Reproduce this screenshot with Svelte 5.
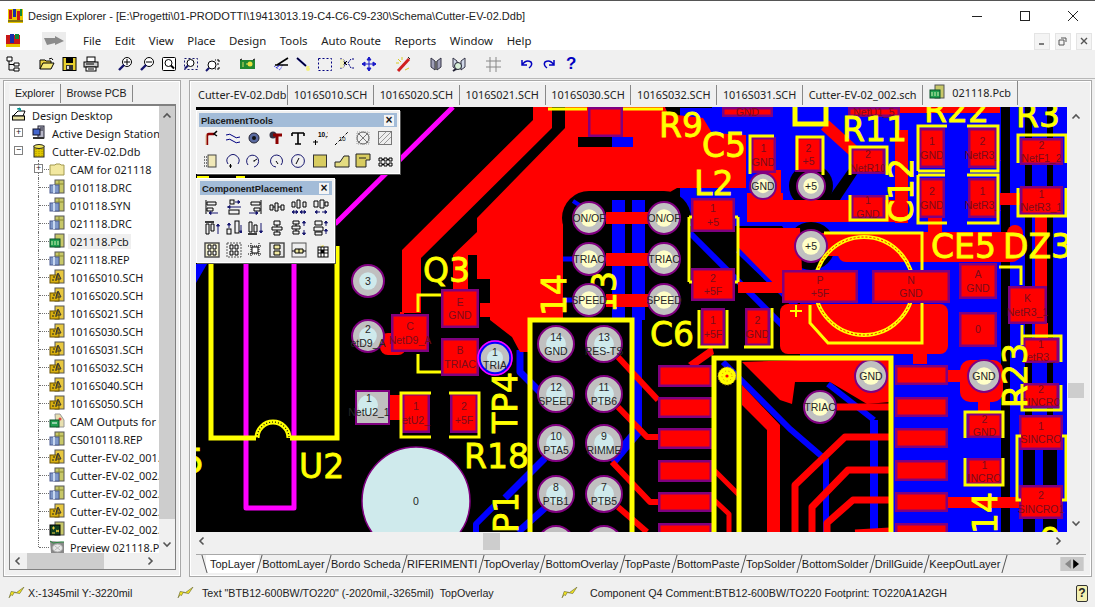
<script lang="ts">
  // --- chrome data ---
  const menus = ['File', 'Edit', 'View', 'Place', 'Design', 'Tools', 'Auto Route', 'Reports', 'Window', 'Help'];
  const docTabs = ['Cutter-EV-02.Ddb', '1016S010.SCH', '1016S020.SCH', '1016S021.SCH', '1016S030.SCH', '1016S032.SCH', '1016S031.SCH', 'Cutter-EV-02_002.sch'];
  const layers = ['BottomLayer', 'Bordo Scheda', 'RIFERIMENTI', 'TopOverlay', 'BottomOverlay', 'TopPaste', 'BottomPaste', 'TopSolder', 'BottomSolder', 'DrillGuide', 'KeepOutLayer'];

  const tree = [
    { t: 'Design Desktop', d: 0, i: 'desk' },
    { t: 'Active Design Station', d: 1, i: 'station', box: '+' },
    { t: 'Cutter-EV-02.Ddb', d: 1, i: 'db', box: '-' },
    { t: 'CAM for 021118', d: 2, i: 'folder', box: '+' },
    { t: '010118.DRC', d: 2, i: 'doc' },
    { t: '010118.SYN', d: 2, i: 'doc' },
    { t: '021118.DRC', d: 2, i: 'doc' },
    { t: '021118.Pcb', d: 2, i: 'pcb', sel: true },
    { t: '021118.REP', d: 2, i: 'doc' },
    { t: '1016S010.SCH', d: 2, i: 'sch' },
    { t: '1016S020.SCH', d: 2, i: 'sch' },
    { t: '1016S021.SCH', d: 2, i: 'sch' },
    { t: '1016S030.SCH', d: 2, i: 'sch' },
    { t: '1016S031.SCH', d: 2, i: 'sch' },
    { t: '1016S032.SCH', d: 2, i: 'sch' },
    { t: '1016S040.SCH', d: 2, i: 'sch' },
    { t: '1016S050.SCH', d: 2, i: 'sch' },
    { t: 'CAM Outputs for 021118', d: 2, i: 'cam' },
    { t: 'CS010118.REP', d: 2, i: 'doc' },
    { t: 'Cutter-EV-02_001.SCH', d: 2, i: 'sch' },
    { t: 'Cutter-EV-02_002.REP', d: 2, i: 'doc' },
    { t: 'Cutter-EV-02_002.XRF', d: 2, i: 'doc' },
    { t: 'Cutter-EV-02_002.sch', d: 2, i: 'sch' },
    { t: 'Cutter-EV-02_002.xls', d: 2, i: 'xls' },
    { t: 'Preview 021118.PCB', d: 2, i: 'preview', last: true }
  ];

  const dk = '#16166e';
  const ic: Record<string, string> = {
    // tree icons
    desk: `<path d="M2 9l5-5h7l-2 5z" fill="#fff" stroke="#000"/><rect x="1.5" y="9" width="12" height="4" fill="#e8e0a0" stroke="#000"/><path d="M6 2l3-1 1 3" fill="#0aa" stroke="#088"/>`,
    station: `<rect x="7" y="1" width="6" height="12" fill="#b8b8c8" stroke="#223"/><rect x="2" y="4" width="7" height="6" fill="#4466cc" stroke="#112"/><path d="M2 13h11" stroke="#333" stroke-width="2"/><path d="M9 3h3M9 5h3" stroke="#223"/>`,
    db: `<rect x="3" y="3" width="10" height="11" fill="#e0c800" stroke="#222"/><ellipse cx="8" cy="3.5" rx="5" ry="2" fill="#f4e860" stroke="#222"/><path d="M5 6v7M8 6v8M11 6v7" stroke="#a89000" stroke-dasharray="1 1"/>`,
    folder: `<path d="M1 4h5l1-1h4l1 1h3v10H1z" fill="#f2e8a0" stroke="#a09850"/>`,
    doc: `<rect x="6" y="1" width="9" height="13" fill="#c8c868" stroke="#555"/><path d="M10 1v13M6 5h9" stroke="#888830"/><rect x="1" y="6" width="9" height="8" fill="#7f98c8" stroke="#4a5a90"/><path d="M5 6v8" stroke="#c8d8f0" stroke-width="2"/>`,
    sch: `<rect x="6" y="1" width="9" height="13" fill="#e8c840" stroke="#555"/><rect x="1" y="6" width="9" height="8" fill="#d8b010" stroke="#6a5000"/><path d="M4 8h5M3 11h5" stroke="#222" stroke-dasharray="2 1"/><path d="M9 4l3 6H7z" fill="none" stroke="#333"/>`,
    pcb: `<rect x="6" y="1" width="9" height="13" fill="#c8c868" stroke="#555"/><rect x="1" y="6" width="10" height="8" fill="#20a050" stroke="#0a5028"/><path d="M3 8v4M6 8v4M9 8v4" stroke="#d0f0b0"/>`,
    cam: `<path d="M6 1l5-0 4 6v7H7z" fill="#e8e0b0" stroke="#999"/><circle cx="11" cy="6" r="1.5" fill="#d44"/><rect x="1" y="7" width="9" height="7" fill="#20a050" stroke="#0a5028"/><path d="M3 10h5" stroke="#fff"/>`,
    xls: `<rect x="6" y="1" width="9" height="13" fill="#c8c868" stroke="#555"/><rect x="1" y="4" width="10" height="10" fill="#104020" stroke="#000"/><path d="M3 7h3M4.5 5.5v3M7 11l3-2M7 9l3 2M3 12h3" stroke="#f0d040"/>`,
    preview: `<path d="M1 2l14 1v11H2z" fill="#888"/><path d="M1 2l3 2 8-1 3 0" fill="none" stroke="#2a8a40"/><ellipse cx="8.5" cy="9" rx="5" ry="4" fill="#e8e8e8" stroke="#aaa"/><path d="M6 7l5 4M11 7l-5 4" stroke="#bbb"/>`,
    // main toolbar
    tree: `<path d="M2 1h5v4H2zM9 7h5v3H9zM9 12h5v3H9z" fill="#fff" stroke="#000"/><path d="M4 5v9h5M4 8.5h5" fill="none" stroke="#000"/>`,
    open: `<path d="M1 13V4h5l1 1h5v2" fill="#e8d040" stroke="#000"/><path d="M1 13l3-6h11l-3 6z" fill="#f4e878" stroke="#000"/><path d="M10 3q3-2 4 1" fill="none" stroke="#000"/>`,
    save: `<rect x="2" y="1.5" width="13" height="13" fill="#e8d030" stroke="#000"/><rect x="5" y="2" width="7" height="5" fill="#000"/><rect x="5" y="9" width="7" height="5" fill="#333"/><rect x="6" y="10" width="2" height="3" fill="#ddd"/>`,
    print: `<rect x="4" y="1" width="8" height="5" fill="#fff" stroke="#000"/><rect x="1" y="6" width="14" height="5" fill="#ccc" stroke="#000"/><rect x="3" y="11" width="10" height="4" fill="#fff" stroke="#000"/><path d="M5 13h6M3 8h8" stroke="#000"/>`,
    zin: `<circle cx="10" cy="6" r="4.5" fill="#fff" stroke="#000"/><path d="M7 6h6M10 3v6" stroke="#000"/><path d="M7 9l-5 5" stroke="${dk}" stroke-width="2.4"/>`,
    zout: `<circle cx="10" cy="6" r="4.5" fill="#fff" stroke="#000"/><path d="M7 6h6" stroke="#000"/><path d="M7 9l-5 5" stroke="${dk}" stroke-width="2.4"/>`,
    zpage: `<rect x="1.5" y="1.5" width="13" height="13" rx="1" fill="#fff" stroke="#000"/><circle cx="7.5" cy="7" r="3.5" fill="#fff" stroke="#000"/><path d="M10 9.5l3 3" stroke="#000" stroke-width="2"/>`,
    zsel: `<rect x="1.5" y="2.5" width="13" height="11" fill="none" stroke="${dk}" stroke-dasharray="2 2"/><circle cx="7.5" cy="7" r="3.5" fill="#fff" stroke="#000"/><path d="M5 9.5l-3 3" stroke="${dk}" stroke-width="2"/>`,
    zdot: `<circle cx="7" cy="9" r="4" fill="#fff" stroke="#000"/><path d="M4 12l-3 3" stroke="${dk}" stroke-width="2"/><path d="M12 4h2M14 4v2M12 8h2M12 13h2M14 11v2" stroke="#000"/><path d="M10 4h1M10 13h1" stroke="#000"/>`,
    board: `<rect x="1" y="4" width="15" height="9" fill="#208830"/><path d="M4 6v5M7 8h5" stroke="#d0e060"/><circle cx="11" cy="8" r="2.5" fill="#e8e040"/><path d="M1 4l2-1M14 4l2-1" stroke="#000"/>`,
    cross: `<path d="M1 10l6 4 3-6" fill="none" stroke="#2a2ae0" stroke-dasharray="1 1"/><path d="M4 9l11-7M2 9h13" stroke="#000" stroke-width="1.6"/><path d="M3 12l4-3" stroke="#2a2ae0"/>`,
    line: `<path d="M2 2l9 8" stroke="#000080" stroke-width="2"/><path d="M2 2l9 8" stroke="#000" /><path d="M11 10h4l-3 3z" fill="#f4f080"/><circle cx="13" cy="13" r="2" fill="#f4f080"/>`,
    dash: `<rect x="1.5" y="2.5" width="13" height="12" fill="none" stroke="#000080" stroke-dasharray="2 2"/>`,
    lasso: `<path d="M1 3h3l3 4-3 5H1M15 3h-3l-3 4 3 5h3" fill="none" stroke="#000080" stroke-dasharray="2 1"/><path d="M4 5l4 4M8 5l-4 4" stroke="#000"/><rect x="1" y="3" width="4" height="9" fill="#f4f0b0" opacity=".7"/>`,
    move: `<path d="M8 1v14M1 8h14M8 1L6 4h4zM8 15l-2-3h4zM1 8l3-2v4zM15 8l-3-2v4z" fill="#1a1ac8" stroke="#1a1ac8"/>`,
    wand: `<path d="M3 15L14 3" stroke="#d02020" stroke-width="3"/><path d="M3 3l3 3M7 1l0 3M1 7l3 0M10 14l4-2" stroke="#d8c820"/><path d="M13 1l2 2" stroke="#222"/>`,
    book: `<path d="M2 2l4 3v9l-4-3zM12 2l-4 3v9l4-3z" fill="#a0a0b8" stroke="#334"/><path d="M6 5h2v9H6z" fill="#666"/>`,
    bookz: `<path d="M2 2l4 3v9l-4-3zM14 2l-4 3v9l4-3z" fill="#d0d8e8" stroke="#334"/><circle cx="7" cy="10" r="3.5" fill="#d8f0d8" stroke="#223"/><path d="M5 13l-3 2" stroke="#223" stroke-width="2"/>`,
    hash: `<path d="M5 1v15M11 1v15M1 5h15M1 11h15" stroke="#888" fill="none"/>`,
    undo: `<path d="M3 4v5h5M3 9q4-6 9-3 2 3-2 6" fill="none" stroke="#0000c0" stroke-width="1.5"/>`,
    redo: `<path d="M13 4v5H8M13 9Q9 3 4 6q-2 3 2 6" fill="none" stroke="#0000c0" stroke-width="1.5"/>`,
    // placement tools
    arc: `<path d="M4 15V6q0-2 2-2h5" fill="none" stroke="#8b0000" stroke-width="2.4"/><path d="M14 1l-3 3 3 2" fill="none" stroke="#000" stroke-width="1.5"/><rect x="2" y="4" width="2" height="11" fill="#f8e8c0" opacity=".5"/>`,
    wave: `<path d="M1 5q4-2 7 1t7 1M1 10q4-2 7 1t7 1" fill="none" stroke="#000080"/>`,
    pad: `<circle cx="8" cy="8" r="5" fill="#5a6aa0" stroke="#223"/><circle cx="8" cy="8" r="2" fill="#111"/>`,
    via: `<circle cx="5" cy="5" r="3.5" fill="#334"/><path d="M5 5h9M9 5v9" stroke="#8b0000" stroke-width="3"/>`,
    ttext: `<path d="M2 3h12M8 3v11M5 14h6M2 3v3M14 3v3" stroke="#000" fill="none" stroke-width="1.6"/>`,
    coord: `<path d="M1 12h5M3.5 10v5" stroke="#000"/><text x="6" y="7" font-size="6.5" font-weight="bold" font-family="Liberation Sans" fill="#000">10,10</text>`,
    dim: `<path d="M1 15L15 1" stroke="#000" stroke-dasharray="3 2"/><text x="5" y="11" font-size="6" font-family="Liberation Sans" fill="#000">10</text>`,
    xcirc: `<circle cx="8" cy="8" r="6" fill="none" stroke="#555"/><path d="M3 3l10 10M13 3L3 13" stroke="#777"/><rect x="2" y="2" width="12" height="12" fill="none" stroke="#999" stroke-dasharray="1 1"/>`,
    hatch: `<rect x="1.5" y="1.5" width="13" height="13" fill="#eee" stroke="#777"/><path d="M2 9l7-7M2 14l12-12M7 14l7-7" stroke="#999"/>`,
    comp: `<rect x="5" y="2" width="8" height="12" fill="#f0e8b8" stroke="#444"/><path d="M1 4h3M1 7h3M1 10h3M1 13h3" stroke="#000" stroke-dasharray="1 1"/>`,
    arc1: `<path d="M3 11A6 6 0 1 1 13 11" fill="none" stroke="${dk}"/><path d="M4 13h3M5.5 11v4" stroke="#000"/>`,
    arc2: `<path d="M2 12A6 6 0 1 1 8 14" fill="none" stroke="${dk}"/><circle cx="8" cy="8" r=".7" fill="#000"/><path d="M8 8l3-2" stroke="#000"/>`,
    arc3: `<path d="M13 12A6 6 0 1 0 8 14" fill="none" stroke="${dk}"/><path d="M8 8l2 3" stroke="#000"/>`,
    circ: `<circle cx="8" cy="8" r="6.4" fill="none" stroke="${dk}"/><path d="M6 11l3-6" stroke="#000"/>`,
    fill: `<rect x="1.5" y="2" width="13" height="12" fill="#d8cc60" stroke="#333"/>`,
    poly: `<path d="M1 14h14V3h-5L6 9H1z" fill="#e4dc80" stroke="#222"/>`,
    poly2: `<path d="M1 1h14v6h-4v7H1z" fill="#d8cc60" stroke="#222"/><path d="M4 5h7" stroke="#222"/>`,
    array: `<path d="M2 5h3v3H2zM7 5h3v3H7zM12 5h3v3h-3zM2 10h3v3H2zM7 10h3v3H7zM12 10h3v3h-3z" fill="none" stroke="#000"/><path d="M5 6.5h2M10 6.5h2M5 11.5h2M10 11.5h2" stroke="#000"/>`,
    // component placement (small boxes + navy arrows)
    aL: `<path d="M2 1v14" stroke="#000"/><path d="M3 3h9v3H3zM3 9h6v3H3z" fill="none" stroke="#000"/><path d="M14 14H5M5 14l2-1.5v3z" stroke="${dk}" fill="${dk}"/>`,
    aCx: `<rect x="4" y="1" width="4" height="4" fill="none" stroke="#000"/><rect x="3" y="11" width="10" height="4" fill="none" stroke="#000"/><path d="M1 8h14M9 3h5M14 3l-2-1.5v3zM2 8l2-1.5v3z" stroke="${dk}" fill="${dk}"/>`,
    aR: `<path d="M14 1v14" stroke="#000"/><path d="M4 3h9v3H4zM7 9h6v3H7z" fill="none" stroke="#000"/><path d="M2 14h9M11 14l-2-1.5v3z" stroke="${dk}" fill="${dk}"/>`,
    dH: `<path d="M1 6h3v5H1zM6 4h3v8H6zM12 6h3v5h-3z" fill="none" stroke="#000"/><path d="M4 8h2M9 8h3" stroke="#000"/>`,
    dHp: `<path d="M1 3h3v5H1zM6 1h3v8H6zM12 3h3v5h-3z" fill="none" stroke="#000"/><path d="M1 13h6M1 13l2-1.5v3zM7 13l-2-1.5v3zM9 13h6M9 13l2-1.5v3zM15 13l-2-1.5v3z" stroke="${dk}" fill="${dk}"/>`,
    dHm: `<path d="M1 2h4v6H1zM7 1h4v8H7z" fill="none" stroke="#000"/><path d="M12 3h3v4h-3z" fill="none" stroke="#000"/><path d="M2 13h5M2 13l2-1.5v3zM14 13H9M14 13l-2-1.5v3z" stroke="${dk}" fill="${dk}"/>`,
    aT: `<path d="M1 2h9" stroke="#000" stroke-width="1.5"/><path d="M2 4h3v10H2zM7 4h3v7H7z" fill="none" stroke="#000"/><path d="M14 14V4M14 4l-1.5 2h3z" stroke="${dk}" fill="${dk}"/>`,
    aCy: `<rect x="1" y="9" width="4" height="5" fill="none" stroke="#000"/><rect x="9" y="1" width="4" height="12" fill="none" stroke="#000"/><path d="M3 3v5M3 3L1.5 5h3zM15 5v8M15 13l-1.5-2h3z" stroke="${dk}" fill="${dk}"/><path d="M1 8h12" stroke="none"/>`,
    aB: `<path d="M1 14h9" stroke="#000" stroke-width="1.5"/><path d="M2 2h3v10H2zM7 5h3v7H7z" fill="none" stroke="#000"/><path d="M14 3v10M14 13l-1.5-2h3z" stroke="${dk}" fill="${dk}"/>`,
    dV: `<path d="M5 1h6v4H5zM3 7h10v3H3zM5 12h6v3H5z" fill="none" stroke="#000"/><path d="M8 5v2M8 10v2" stroke="#000"/>`,
    dVp: `<path d="M2 1h6v3H2zM1 6h8v3H1zM2 11h6v3H2z" fill="none" stroke="#000"/><path d="M5 4v2M5 9v2" stroke="#000"/><path d="M13 1v5M13 1l-1.5 2h3zM13 15v-5M13 15l-1.5-2h3z" stroke="${dk}" fill="${dk}"/>`,
    dVm: `<path d="M2 1h7v4H2zM1 7h9v4H1zM2 12h7v3H2z" fill="none" stroke="#000"/><path d="M13 1v5M13 1l-1.5 2h3zM13 14V9M13 9l-1.5 2h3z" stroke="${dk}" fill="${dk}"/>`,
    grp1: `<rect x="1" y="1" width="14" height="14" fill="#f0eecc" stroke="#444" stroke-width="1.4"/><path d="M4 3h3v4H4zM9 3h3v4H9zM4 9h3v4H4zM9 9h3v4H9z" fill="#fff" stroke="#000"/>`,
    grp2: `<rect x="1" y="1" width="14" height="14" fill="none" stroke="#555" stroke-dasharray="2 1"/><path d="M4 3h3v4H4zM9 3h3v4H9zM4 9h3v4H4zM9 9h3v4H9z" fill="none" stroke="#000"/>`,
    snap: `<path d="M1 4h14M1 12h14M4 1v14M12 1v14" stroke="#000" stroke-dasharray="1 1"/><rect x="5" y="5" width="6" height="6" fill="#fff" stroke="#000"/>`,
    swap: `<rect x="1" y="1" width="14" height="14" fill="#e8e8e8" stroke="#444" stroke-width="1.4"/><path d="M5 3h6v4H5zM5 9h6v4H5z" fill="#f0e8a0" stroke="#000"/>`,
    box: `<rect x="1" y="1" width="14" height="14" fill="#eee" stroke="#555"/><path d="M4 7h8v4H4z" fill="#f0e8a0" stroke="#000"/><path d="M8 7v4M1 9h3M12 9h3" stroke="#000"/>`,
    sheet: `<path d="M7 1l1 3 3-1-2 3" fill="#e8d830"/><rect x="5" y="5" width="10" height="10" fill="#fff" stroke="#000"/><path d="M5 8h10M8 5v10M11 5v10M5 11h10" stroke="#000"/><rect x="8" y="8" width="3" height="3" fill="#000"/>`
  };

  const tb = [['tree'], ['open', 'save', 'print'], ['zin', 'zout', 'zpage', 'zsel', 'zdot'], ['board'], ['cross', 'line', 'dash', 'lasso', 'move'], ['wand'], ['book', 'bookz'], ['hash'], ['undo', 'redo']];
  const placeTools = ['arc', 'wave', 'pad', 'via', 'ttext', 'coord', 'dim', 'xcirc', 'hatch', 'comp', 'arc1', 'arc2', 'arc3', 'circ', 'fill', 'poly', 'poly2', 'array'];
  const compTools = ['aL', 'aCx', 'aR', 'dH', 'dHp', 'dHm', 'aT', 'aCy', 'aB', 'dV', 'dVp', 'dVm', 'grp1', 'grp2', 'snap', 'swap', 'box', 'sheet'];

  // --- PCB data, all in page coordinates ---
  type P = number[][];
  const pts = (p: P) => p.map((q) => q.join(',')).join(' ');

  const blueFill = [[680, 107, 387, 250], [890, 357, 177, 175], [612, 137, 21, 10]];
  const blackOnBlue = [[1001, 107, 9, 425], [1025, 107, 7, 313], [1047, 107, 6, 313], [1023, 420, 12, 112], [1043, 420, 14, 112], [680, 107, 32, 1]];
  const blackPolys: P[] = [
    [[680, 226], [782, 226], [800, 250], [800, 357], [680, 357]],
    [[823, 205], [865, 146], [873, 150], [832, 212]]
  ];
  const blueTracks: [P, number][] = [
    [[[690, 233], [790, 333]], 6],
    [[[738, 250], [800, 310]], 6],
    [[[637, 318], [637, 432], [612, 462]], 10],
    [[[520, 350], [520, 372], [546, 398]], 7],
    [[[545, 458], [505, 498]], 7],
    [[[545, 508], [518, 532]], 7],
    [[[476, 532], [476, 524], [496, 504]], 6],
    [[[723, 362], [790, 429], [826, 460], [826, 532]], 6],
    [[[874, 420], [874, 532]], 8],
    [[[828, 384], [874, 420]], 6]
  ];
  const redPolys: P[] = [
    [[533, 107], [552, 107], [552, 128], [421, 258], [421, 313], [402, 313], [402, 250], [533, 120]],
    [[565, 107], [665, 107], [668, 114], [703, 118], [712, 133], [746, 135], [746, 188], [677, 188], [670, 192], [670, 318], [528, 318], [528, 352], [520, 352], [512, 337], [490, 320], [490, 317], [480, 317], [480, 303], [490, 303], [490, 279], [477, 279], [477, 255], [468, 255], [468, 290], [453, 290], [453, 255], [477, 232], [477, 218], [565, 128]],
    [[738, 228], [800, 228], [802, 270], [790, 300], [738, 247]],
    [[747, 193], [783, 193], [783, 222], [747, 222]],
    [[742, 362], [890, 357], [890, 402], [867, 404], [830, 382], [795, 382], [792, 404], [780, 400]],
    [[742, 385], [780, 425], [780, 532], [767, 532], [767, 430], [742, 405]],
    [[688, 363], [712, 346], [714, 354], [694, 368]]
  ];
  const redRects: [number, number, number, number, number?][] = [
    [780, 200, 120, 22],
    [895, 130, 13, 93],
    [838, 232, 182, 30, 8],
    [1007, 225, 16, 35, 8],
    [780, 233, 60, 23],
    [928, 218, 14, 15],
    [1000, 193, 20, 12],
    [1035, 215, 12, 75],
    [780, 304, 168, 50, 8],
    [913, 353, 14, 11],
    [960, 360, 43, 42, 10],
    [948, 370, 12, 12],
    [978, 402, 12, 11],
    [1035, 323, 13, 15],
    [948, 497, 72, 11],
    [738, 282, 46, 11],
    [386, 395, 18, 25],
    [380, 333, 26, 22, 8],
    [765, 170, 16, 24]
  ];
  const redTracks: [P, number][] = [
    [[[825, 125], [858, 155]], 12],
    [[[618, 357], [658, 400]], 6],
    [[[618, 407], [647, 437], [658, 437]], 6],
    [[[612, 462], [650, 502], [658, 502]], 6],
    [[[618, 507], [647, 532]], 6],
    [[[712, 468], [739, 495]], 5],
    [[[712, 498], [729, 514], [729, 532]], 5],
    [[[795, 532], [795, 485], [845, 437], [890, 437]], 7],
    [[[812, 532], [812, 507], [848, 470], [890, 470]], 7],
    [[[827, 532], [827, 523], [853, 500], [890, 500]], 7],
    [[[855, 532], [890, 530]], 5],
    [[[837, 407], [890, 407]], 7],
    [[[848, 110], [1000, 110]], 6],
    [[[402, 312], [402, 330]], 4]
  ];

  // rectangular pads: x, y, w, h, label lines
  const pads: [number, number, number, number, string[]][] = [
    [391, 314, 38, 38, ['C', 'NetD9_A']], [441, 289, 38, 39, ['E', 'GND']], [441, 338, 38, 38, ['B', 'TRIAC']],
    [402, 393, 28, 40, ['1', 'etU2_']], [450, 393, 28, 40, ['2', '+5F']],
    [588, 107, 35, 30, []], [722, 107, 51, 10, ['GND']], [751, 137, 25, 36, ['1', 'GND']],
    [795, 137, 27, 35, ['2', '+5']], [848, 107, 52, 10, ['NetU1_5']],
    [691, 198, 44, 34, ['1', '+5']], [691, 268, 44, 33, ['2', '+5F']],
    [701, 308, 24, 38, ['1', '+5F']], [745, 308, 25, 38, ['2', 'GND']],
    [851, 148, 34, 26, ['2', 'NetR10']], [851, 195, 34, 24, ['1', 'GND']],
    [919, 128, 26, 40, ['1', 'GND']], [968, 128, 29, 40, ['2', 'NetR3_']],
    [919, 178, 26, 40, ['2', 'GND']], [968, 178, 29, 40, ['1', 'NetR3_']],
    [1020, 138, 43, 27, ['2', 'NetF1_2']], [1020, 186, 43, 29, ['1', 'NetR3_1']],
    [959, 263, 38, 36, ['A', 'GND']], [959, 312, 38, 35, ['0']], [1008, 286, 39, 38, ['K', 'NetR3_1']],
    [1023, 338, 36, 25, ['1', 'etR3_']], [1023, 383, 36, 25, ['2', 'SINCRO']],
    [1019, 415, 44, 35, ['1', 'SINCRO']], [1019, 485, 44, 34, ['2', 'SINCRO1']],
    [967, 413, 35, 25, ['2', 'GND']], [967, 458, 35, 27, ['1', 'INCRO']],
    [658, 365, 54, 22, []], [658, 397, 54, 21, []], [658, 428, 54, 21, []], [658, 460, 54, 22, []], [658, 492, 54, 20, []], [658, 523, 54, 20, []],
    [895, 365, 53, 20, []], [895, 397, 53, 20, []], [895, 428, 53, 20, []], [895, 460, 53, 21, []], [895, 492, 53, 20, []], [895, 523, 53, 20, []]
  ];
  // the capacitor pads sit on top of its ring
  const capPads: [number, number, number, number, string[]][] = [
    [782, 270, 76, 33, ['P', '+5F']], [872, 270, 78, 33, ['N', 'GND']]
  ];

  // round pads: x, y, r, hole colour, label lines
  const cy = '#cfeaec', py = '#ffffc8';
  const vias: [number, number, number, string, string[]][] = [
    [368, 281, 16, cy, ['3']], [368, 336, 16, cy, ['2', 'etD9_A']],
    [589, 218, 16, py, ['ON/OF']], [664, 218, 16, py, ['ON/OF']],
    [589, 259, 16, py, ['TRIAC']], [664, 259, 16, py, ['TRIAC']],
    [589, 300, 16, py, ['SPEED']], [664, 300, 16, py, ['SPEED']],
    [556, 344, 18, cy, ['14', 'GND']], [604, 344, 18, cy, ['13', 'RES-TS']],
    [556, 394, 18, cy, ['12', 'SPEED']], [604, 394, 18, cy, ['11', 'PTB6']],
    [556, 443, 18, cy, ['10', 'PTA5']], [604, 443, 18, cy, ['9', 'RIMME']],
    [556, 494, 18, cy, ['8', 'PTB1']], [604, 494, 18, cy, ['7', 'PTB5']],
    [556, 544, 18, cy, []], [604, 544, 18, cy, []],
    [763, 186, 13, py, ['GND']], [811, 186, 14, py, ['+5']], [811, 246, 16, py, ['+5']],
    [871, 376, 16, py, ['GND']], [984, 376, 16, py, ['GND']], [820, 407, 16, py, ['TRIAC']]
  ];

  const yellow: [P, number][] = [
    [[[337, 246], [337, 438], [290, 438]], 5],
    [[[256, 438], [211, 438], [211, 262]], 5],
    [[[530, 532], [530, 320], [632, 320], [632, 532]], 5],
    [[[714, 532], [714, 358], [891, 358], [891, 532]], 5],
    [[[739, 358], [739, 532]], 5],
    [[[824, 233], [922, 233], [922, 343], [828, 343], [810, 323], [810, 305]], 3],
    [[[795, 107], [795, 124], [826, 124], [826, 107]], 5],
    [[[418, 312], [418, 295], [441, 295]], 3],
    [[[418, 354], [418, 372], [441, 372]], 3],
    [[[431, 393], [401, 393], [401, 437], [431, 437]], 3],
    [[[449, 437], [479, 437], [479, 393], [449, 393]], 3],
    [[[689, 217], [689, 282]], 3], [[[738, 217], [738, 282]], 3],
    [[[689, 217], [692, 217]], 3], [[[689, 282], [692, 282]], 3], [[[738, 217], [735, 217]], 3], [[[738, 282], [735, 282]], 3],
    [[[699, 310], [699, 347], [727, 347], [727, 310]], 3],
    [[[744, 347], [772, 347], [772, 308]], 3],
    [[[750, 174], [750, 136], [774, 136]], 3],
    [[[797, 170], [797, 137], [823, 137], [823, 175]], 3],
    [[[850, 175], [850, 147], [887, 147], [887, 175]], 3],
    [[[850, 195], [850, 220], [887, 220], [887, 195]], 3],
    [[[918, 171], [918, 126], [947, 126]], 3], [[[918, 175], [918, 223], [947, 223]], 3],
    [[[967, 126], [998, 126], [998, 171], [970, 171]], 3], [[[967, 175], [998, 175], [998, 223], [967, 223]], 3],
    [[[918, 171], [945, 171]], 3], [[[918, 175], [945, 175]], 3],
    [[[1018, 163], [1018, 135], [1066, 135], [1066, 163]], 3],
    [[[1018, 188], [1018, 216], [1066, 216], [1066, 188]], 3],
    [[[999, 267], [1021, 267], [1021, 285]], 3],
    [[[1022, 325], [1022, 345]], 3],
    [[[1023, 336], [1061, 336], [1061, 362]], 3],
    [[[1022, 384], [1022, 410], [1061, 410], [1061, 385]], 3],
    [[[965, 438], [965, 412], [1003, 412], [1003, 438]], 3],
    [[[965, 458], [965, 485], [1003, 485], [1003, 458]], 3],
    [[[1021, 436], [1017, 436], [1017, 500], [1021, 500]], 3],
    [[[1062, 436], [1066, 436], [1066, 500], [1062, 500]], 3],
    [[[548, 109], [587, 109]], 3], [[[623, 109], [663, 109]], 3],
    [[[790, 311], [802, 311]], 2], [[[796, 305], [796, 317]], 2],
    [[[197, 177], [209, 177]], 2], [[[236, 177], [245, 177]], 2]
  ];

  // silkscreen designators: label, x, y (baseline start), rotated
  const silkUnder: [string, number, number, boolean][] = [['14', 566, 316, true], ['13', 616, 313, true]];
  const silk: [string, number, number, boolean][] = [
    ['U2', 299, 478, false], ['Q3', 423, 282, false], ['R9', 659, 137, false], ['C5', 702, 157, false],
    ['L2', 694, 195, false], ['C6', 650, 346, false], ['R11', 842, 141, false], ['R22', 924, 122, false],
    ['R3', 1016, 127, false], ['CE5', 931, 258, false], ['DZ3', 1003, 258, false], ['R18', 464, 468, false],
    ['C12', 913, 223, true], ['R23', 1027, 408, true], ['TP4', 517, 433, true], ['P1', 518, 533, true],
    ['14', 997, 534, true], ['5', 183, 473, false], ['9', 1040, 552, false]
  ];

  const padLabelDy = (n: number, i: number) => (n === 1 ? 3.5 : i === 0 ? -3 : 10.5);
</script>

{#snippet icon(name: string, cls = 'ic')}
  <svg class={cls} viewBox="0 0 16 16">{@html ic[name]}</svg>
{/snippet}

{#snippet zap()}
  <svg class="zap" viewBox="0 0 16 12"><path d="M1 11l2-6 5 1 7-5-4 6-5-1-2 3-1-1z" fill="#f2e420" stroke="#6a6a30" stroke-width=".6" /></svg>
{/snippet}

{#snippet padRect(x: number, y: number, w: number, h: number, lines: string[])}
  <rect x={x + 1.25} y={y + 1.25} width={w - 2.5} height={h - 2.5} fill="#ff0000" stroke="#800080" stroke-width="2.5" />
  {#each lines as l, i}
    <text x={x + w / 2} y={y + h / 2 + padLabelDy(lines.length, i)} text-anchor="middle" class="padtxt">{l}</text>
  {/each}
{/snippet}

{#snippet silkText(s: string, x: number, y: number, rot: boolean)}
  <text {x} {y} class="silk" transform={rot ? `rotate(-90 ${x} ${y})` : undefined}>{s}</text>
{/snippet}

<div class="app">
  <div class="titlebar">
    <svg class="logo" viewBox="0 0 16 16">
      <rect x="1" y="1" width="15" height="14" fill="#e8c800" />
      <path d="M2 2h3v9H2z" fill="#c81818" /><path d="M6 1h3v8H6z" fill="#182ea8" /><path d="M10 3h3v9h-3z" fill="#c81818" />
      <path d="M13 1h2v7h-2z" fill="#108838" /><path d="M1 13h15" stroke="#222" />
    </svg>
    <span class="title">Design Explorer - [E:\Progetti\01-PRODOTTI\19413013.19-C4-C6-C9-230\Schema\Cutter-EV-02.Ddb]</span>
    <div class="winbtns">
      <svg viewBox="0 0 12 12"><path d="M1 6.5h10" stroke="#222" /></svg>
      <svg viewBox="0 0 12 12"><rect x="1.5" y="1.5" width="9" height="9" fill="none" stroke="#222" /></svg>
      <svg viewBox="0 0 12 12"><path d="M1 1l10 10M11 1L1 11" stroke="#222" /></svg>
    </div>
  </div>

  <div class="menubar">
    <svg class="logo small" viewBox="0 0 16 16">
      <rect x="1" y="2" width="14" height="12" fill="#c81818" />
      <path d="M5 1h4v9H5z" fill="#182ea8" /><path d="M10 1h4v5h-4z" fill="#108838" /><path d="M1 11h14v3H1z" fill="#e8c800" />
    </svg>
    <div class="grip"><svg viewBox="0 0 24 12"><path d="M2 3h11V1l9 5-9 4v-2l-8 2z" fill="#8a8a8a" /></svg></div>
    {#each menus as m}<span class="menu">{m}</span>{/each}
    <div class="mdi">
      <span><svg viewBox="0 0 10 10"><path d="M2 8h5" stroke="#555" stroke-width="1.5" /></svg></span>
      <span><svg viewBox="0 0 10 10"><path d="M3 2h5v4M1 4h5v5H1z" fill="none" stroke="#555" /></svg></span>
      <span><svg viewBox="0 0 10 10"><path d="M2 2l6 6M8 2L2 8" stroke="#555" stroke-width="1.4" /></svg></span>
    </div>
  </div>

  <div class="toolbar">
    {#each tb as group}
      <div class="tgroup">
        {#each group as name}{@render icon(name)}{/each}
      </div>
    {/each}
    <span class="help">?</span>
  </div>

  <div class="main">
    <aside class="left">
      <div class="lefttabs">
        <span class="ltab on">Explorer</span>
        <span class="ltab">Browse PCB</span>
      </div>
      <div class="treebox">
        <div class="treemid">
          <div class="tree">
            {#each tree as r}
              <div class="row d{r.d}" class:last={r.last}>
                {#if r.box}<span class="exp">{r.box === '+' ? '+' : '−'}</span>{/if}
                {@render icon(r.i, 'tic')}
                <span class="label" class:sel={r.sel}>{r.t}</span>
              </div>
            {/each}
          </div>
          <div class="vs">
            <svg class="chev" viewBox="0 0 10 10"><path d="M1.5 6.5L5 3l3.5 3.5" fill="none" stroke="#555" stroke-width="1.6" /></svg>
            <svg class="chev" viewBox="0 0 10 10"><path d="M1.5 3.5L5 7l3.5-3.5" fill="none" stroke="#555" stroke-width="1.6" /></svg>
          </div>
        </div>
        <div class="hs">
          <svg class="chev" viewBox="0 0 10 10"><path d="M6.5 1.5L3 5l3.5 3.5" fill="none" stroke="#555" stroke-width="1.6" /></svg>
          <div class="hthumb"></div>
          <svg class="chev" viewBox="0 0 10 10"><path d="M3.5 1.5L7 5 3.5 8.5" fill="none" stroke="#555" stroke-width="1.6" /></svg>
        </div>
      </div>
    </aside>

    <section class="right">
      <div class="doctabs">
        {#each docTabs as t}<span class="dtab">{t}</span>{/each}
        <span class="dtab on">{@render icon('pcb', 'tic')}021118.Pcb</span>
      </div>

      <div class="canvasrow">
        <div class="canvas">
          <svg class="pcb" viewBox="196 107 871 425" font-family="'Liberation Sans', sans-serif">
            <rect x="196" y="107" width="871" height="425" fill="#000" />
            <!-- bottom layer -->
            {#each blueFill as b}<rect x={b[0]} y={b[1]} width={b[2]} height={b[3]} fill="#0000ff" />{/each}
            {#each blackOnBlue as b}<rect x={b[0]} y={b[1]} width={b[2]} height={b[3]} fill="#000" />{/each}
            {#each blackPolys as p}<polygon points={pts(p)} fill="#000" />{/each}
            <rect x="739" y="357" width="151" height="175" fill="#000" />
            <circle cx="811" cy="186" r="22" fill="#000" />
            <circle cx="811" cy="246" r="24" fill="#000" />
            {#each blueTracks as [p, w]}<polyline points={pts(p)} fill="none" stroke="#0000ff" stroke-width={w} stroke-linejoin="round" />{/each}
            <polygon points="196,264 207,264 196,283" fill="#0000ff" />
            <line x1="335" y1="224" x2="453" y2="107" stroke="#ff00ff" stroke-width="5" />
            <polyline points="246,262 246,508 294,508 294,262" fill="none" stroke="#ff00ff" stroke-width="5" stroke-linejoin="round" />

            <!-- top layer -->
            {#each redPolys as p}<polygon points={pts(p)} fill="#ff0000" />{/each}
            {#each redRects as r}<rect x={r[0]} y={r[1]} width={r[2]} height={r[3]} rx={r[4] ?? 0} fill="#ff0000" />{/each}
            <!-- clearance round the header and the top pad -->
            <rect x="563" y="218" width="127" height="102" fill="#000" />
            <circle cx="589" cy="218" r="27" fill="#000" />
            <circle cx="664" cy="218" r="27" fill="#000" />
            <rect x="589" y="191" width="75" height="30" fill="#000" />
            <rect x="578" y="137" width="55" height="10" fill="#000" />
            <rect x="612" y="137" width="21" height="10" fill="#0000ff" />
            <rect x="612" y="200" width="13" height="120" fill="#0000ff" />
            <rect x="632" y="200" width="13" height="120" fill="#0000ff" />
            <path d="M563 259h10M563 300h10" stroke="#0000ff" stroke-width="5" />
            <path d="M573 201l11 7" stroke="#0000ff" stroke-width="4" />
            <rect x="606" y="212" width="42" height="12" fill="#ff0000" />
            <rect x="606" y="253" width="42" height="13" fill="#ff0000" />
            <rect x="606" y="294" width="42" height="13" fill="#ff0000" />
            {#each redTracks as [p, w]}<polyline points={pts(p)} fill="none" stroke="#ff0000" stroke-width={w} stroke-linejoin="round" />{/each}

            <circle cx="416" cy="501" r="54" fill={cy} stroke="#800080" stroke-width="1.5" />
            <text x="416" y="505" text-anchor="middle" class="padtxt dark">0</text>

            <!-- pads -->
            {#each pads as [x, y, w, h, lines]}{@render padRect(x, y, w, h, lines)}{/each}

            <!-- square through-hole -->
            <rect x="356" y="391" width="33" height="33" fill="#c0c0c0" stroke="#800080" stroke-width="2" />
            <circle cx="368" cy="405" r="10" fill={cy} />
            <text x="369" y="402" text-anchor="middle" class="padtxt dark">1</text>
            <text x="369" y="416" text-anchor="middle" class="padtxt dark">NetU2_1</text>

            {#each silkUnder as [s, x, y, rot]}{@render silkText(s, x, y, rot)}{/each}

            {#each vias as [x, y, r, hole, lines]}
              <circle cx={x} cy={y} {r} fill="#c0c0c0" stroke="#800080" stroke-width="2" />
              <circle cx={x} cy={y} r={r * 0.55} fill={hole} />
              {#each lines as l, i}
                <text x={x} y={y + padLabelDy(lines.length, i)} text-anchor="middle" class="padtxt dark">{l}</text>
              {/each}
            {/each}

            <!-- test point -->
            <circle cx="495" cy="358" r="16" fill="#c0c0c0" stroke="#0000ff" stroke-width="3.5" />
            <circle cx="495" cy="358" r="17" fill="none" stroke="#ff00ff" stroke-width="1.6" />
            <circle cx="495" cy="358" r="8" fill={cy} />
            <text x="495" y="356" text-anchor="middle" class="padtxt dark">1</text>
            <text x="495" y="369" text-anchor="middle" class="padtxt dark">TRIA</text>

            <!-- overlay -->
            {#each yellow as [p, w]}<polyline points={pts(p)} fill="none" stroke="#ffff00" stroke-width={w} />{/each}
            <path d="M257 438A16 16 0 0 1 289 438" fill="none" stroke="#ffff00" stroke-width="5" />
            <path d="M257 438A16 16 0 0 1 289 438" fill="none" stroke="#000" stroke-width="1.2" stroke-dasharray="1 2" />
            <circle cx="864" cy="286" r="49" fill="none" stroke="#ffff00" stroke-width="4" />
            <circle cx="864" cy="286" r="49" fill="none" stroke="#ff0000" stroke-width="1" stroke-dasharray="2 2" />
            {#each capPads as [x, y, w, h, lines]}{@render padRect(x, y, w, h, lines)}{/each}
            <circle cx="727" cy="376" r="9" fill="#ffff00" stroke="#c8a000" stroke-dasharray="1.5 1.5" />
            <circle cx="727" cy="376" r="1.6" fill="#ff0000" />
            <circle cx="727" cy="376" r="5" fill="none" stroke="#d88000" stroke-dasharray="1 2.5" />

            {#each silk as [s, x, y, rot]}{@render silkText(s, x, y, rot)}{/each}
          </svg>

          <div class="float place">
            <div class="ftitle"><span>PlacementTools</span><b>×</b></div>
            <div class="fgrid nine">
              {#each placeTools as n}{@render icon(n, 'fic')}{/each}
            </div>
          </div>
          <div class="float compl">
            <div class="ftitle"><span>ComponentPlacement</span><b>×</b></div>
            <div class="fgrid six">
              {#each compTools as n}{@render icon(n, 'fic')}{/each}
            </div>
          </div>
        </div>
        <div class="cvs">
          <svg class="chev" viewBox="0 0 10 10"><path d="M1.5 6.5L5 3l3.5 3.5" fill="none" stroke="#555" stroke-width="1.6" /></svg>
          <div class="cvthumb"></div>
          <svg class="chev" viewBox="0 0 10 10"><path d="M1.5 3.5L5 7l3.5-3.5" fill="none" stroke="#555" stroke-width="1.6" /></svg>
        </div>
      </div>

      <div class="chs">
        <svg class="chev" viewBox="0 0 10 10"><path d="M6.5 1.5L3 5l3.5 3.5" fill="none" stroke="#555" stroke-width="1.6" /></svg>
        <div class="chthumb"></div>
        <svg class="chev" viewBox="0 0 10 10"><path d="M3.5 1.5L7 5 3.5 8.5" fill="none" stroke="#555" stroke-width="1.6" /></svg>
      </div>

      <div class="layers">
        <span class="ltb on">TopLayer</span>
        {#each layers as l}<span class="ltb">{l}</span>{/each}
        <div class="lscroll">
          <svg viewBox="0 0 20 12"><rect width="20" height="12" fill="#c8c8c8" /><path d="M9 2v8L4 6z" fill="#888" /><path d="M11 2v8l5-4z" fill="#000" /></svg>
        </div>
      </div>
    </section>
  </div>

  <footer class="status">
    <div class="scell a">{@render zap()}<span>X:-1345mil Y:-3220mil</span></div>
    <div class="scell b">{@render zap()}<span>Text "BTB12-600BW/TO220" (-2020mil,-3265mil)&nbsp; TopOverlay</span></div>
    <div class="scell c">{@render zap()}<span>Component Q4 Comment:BTB12-600BW/TO220 Footprint: TO220A1A2GH</span></div>
    <div class="qmark">?</div>
  </footer>
</div>

<style>
  :global(body) { margin: 0; background: #f0f0f0; }

  .app {
    width: 1095px;
    height: 607px;
    display: flex;
    flex-direction: column;
    overflow: hidden;
    background: #f0f0f0;
    color: #1a1a1a;
    font-family: 'Liberation Sans', Arial, sans-serif;
    font-size: 11px;
  }

  .titlebar {
    height: 30px;
    flex: none;
    display: flex;
    align-items: center;
    background: #fff;
    border-top: 1px solid #555;
    padding-left: 7px;
  }
  .logo { width: 16px; height: 16px; flex: none; }
  .logo.small { margin-left: -1px; }
  .title { margin-left: 5px; font-family: 'Liberation Sans', sans-serif; font-size: 11px; color: #222; white-space: nowrap; }
  .winbtns { margin-left: auto; display: flex; gap: 36px; padding-right: 16px; }
  .winbtns svg { width: 12px; height: 12px; }

  .menubar {
    height: 19px;
    flex: none;
    display: flex;
    align-items: center;
    background: #fff;
    padding-left: 6px;
    position: relative;
  }
  .grip { width: 24px; height: 18px; margin-left: 21px; margin-right: 17px; background: #ececec; display: flex; align-items: center; }
  .grip svg { width: 24px; height: 12px; }
  .menu { font-family: 'Noto Sans', sans-serif; font-size: 11.4px; color: #222; margin-right: 13.6px; white-space: nowrap; }
  .mdi { margin-left: auto; display: flex; gap: 5px; padding-right: 3px; margin-top: 1px; }
  .mdi span { width: 14px; height: 15px; background: #f4f4f4; border: 1px solid #e4e4e4; display: flex; align-items: center; justify-content: center; }
  .mdi svg { width: 10px; height: 10px; }

  .toolbar {
    height: 29px;
    flex: none;
    display: flex;
    align-items: center;
    padding-left: 5px;
    border-bottom: 1px solid #b8b8b8;
    box-sizing: border-box;
  }
  .tgroup { display: flex; gap: 6px; margin-right: 18px; }
  .ic { width: 16px; height: 16px; flex: none; }
  .help { font-family: 'Liberation Sans', sans-serif; font-weight: bold; font-size: 17px; color: #0000c0; margin-left: -9px; }

  .main { flex: 1; display: flex; min-height: 0; padding: 1px 3px 1px 3px; gap: 8px; }

  .left {
    width: 178px;
    flex: none;
    box-sizing: border-box;
    border: 1px solid #a8a8a8;
    box-shadow: inset 0 0 0 1px #fff;
    padding: 3px 4px 6px 5px;
    display: flex;
    flex-direction: column;
  }
  .lefttabs { display: flex; height: 19px; flex: none; align-items: center; font-size: 10.6px; }
  .ltab { padding: 2px 5px 3px 5px; border-right: 1px solid #888; }
  .ltab.on { background: #f4f4f4; padding: 3px 6px 4px 6px; }

  .treebox { flex: 1; min-height: 0; margin-top: 1px; border: 1px solid #808080; border-width: 2px 1px 1px 1px; display: flex; flex-direction: column; background: #fff; }
  .treemid { flex: 1; min-height: 0; display: flex; }
  .tree { flex: 1; min-width: 0; overflow: hidden; }
  .row { height: 18px; position: relative; display: flex; align-items: center; white-space: nowrap; font-family: 'Noto Sans', sans-serif; font-size: 10.9px; }
  .d0 { padding-left: 1px; }
  .d1 { padding-left: 21px; }
  .d2 { padding-left: 39px; }
  .d2::before { content: ''; position: absolute; left: 28px; top: 0; bottom: 0; border-left: 1px dotted #707070; }
  .d2::after { content: ''; position: absolute; left: 29px; width: 10px; top: 9px; border-top: 1px dotted #707070; }
  .d2.last::before { bottom: 9px; }
  .tic { width: 16px; height: 16px; flex: none; }
  .label { margin-left: 3px; padding: 0 2px; position: relative; }
  .label.sel { background: #efefef; }
  .exp {
    position: absolute;
    width: 9px;
    height: 9px;
    top: 4px;
    box-sizing: border-box;
    border: 1px solid #808080;
    background: #fff;
    font-size: 9px;
    line-height: 6px;
    text-align: center;
    z-index: 1;
  }
  .d1 .exp { left: 4px; }
  .d2 .exp { left: 24px; }

  .vs { width: 16px; flex: none; background: linear-gradient(#cdcdcd 0 413px, #f0f0f0 413px); display: flex; flex-direction: column; justify-content: space-between; padding: 5px 0 4px; box-sizing: border-box; }
  .chev { width: 10px; height: 10px; flex: none; }
  .vs .chev, .cvs .chev { margin: 0 auto; }
  .hs { height: 16px; flex: none; background: #f0f0f0; display: flex; align-items: center; padding: 0 20px 0 3px; }
  .hthumb { width: 77px; height: 16px; background: #cdcdcd; margin: 0 auto 0 4px; }

  .right {
    flex: 1;
    min-width: 0;
    box-sizing: border-box;
    border: 1px solid #a8a8a8;
    box-shadow: inset 0 0 0 1px #fff;
    padding: 2px 5px 3px 6px;
    display: flex;
    flex-direction: column;
  }
  .doctabs { height: 23px; flex: none; display: flex; align-items: center; padding-left: 2px; font-family: 'Noto Sans', sans-serif; font-size: 10.9px; color: #222; }
  .dtab { padding: 0 5.7px; height: 20px; display: flex; align-items: center; border-right: 1px solid #888; white-space: nowrap; gap: 7px; }
  .dtab:first-child { padding: 0 0.7px 0 0; }
  .dtab.on { padding: 0 6px 2px 6px; margin-top: -3px; height: 22px; }

  .canvasrow { display: flex; height: 425px; flex: none; margin-top: 1px; }
  .canvas { width: 871px; height: 425px; position: relative; flex: none; overflow: hidden; }
  .pcb { display: block; width: 871px; height: 425px; }
  .padtxt { font-size: 10.5px; fill: #7a0c1c; }
  .padtxt.dark { fill: #262626; }
  .silk { font-family: 'DejaVu Sans', sans-serif; font-size: 33px; fill: #ffff00; stroke: #ffff00; stroke-width: 0.8; }

  .cvs { width: 18px; flex: none; background: #f0f0f0; display: flex; flex-direction: column; padding: 5px 0 4px; box-sizing: border-box; align-items: center; }
  .cvthumb { width: 16px; height: 15px; background: #cdcdcd; margin: 261px 0 auto; }

  .chs { height: 18px; flex: none; display: flex; align-items: center; background: #f0f0f0; padding: 0 4px 0 1px; width: 871px; box-sizing: border-box; }
  .chthumb { width: 17px; height: 17px; background: #cdcdcd; margin: 0 auto 0 276px; }

  .layers {
    flex: 1;
    display: flex;
    align-items: center;
    margin-top: 4px;
    border-top: 1px solid #a8a8a8;
    font-size: 11px;
    padding-left: 10px;
  }
  .ltb { position: relative; padding: 0 3.3px 0 3px; height: 18px; display: flex; align-items: center; white-space: nowrap; }
  .ltb::after { content: ''; position: absolute; right: -1px; top: 0; bottom: 0; border-right: 1px solid #555; transform: skewX(-16deg); }
  .ltb.on { background: #fff; padding: 0 4px; }
  .ltb.on::before { content: ''; position: absolute; left: -2px; top: 0; bottom: 0; border-left: 1px solid #555; transform: skewX(16deg); }
  .lscroll { margin-left: auto; margin-right: 2px; display: flex; }
  .lscroll svg { width: 24px; height: 14px; }

  .float {
    position: absolute;
    background: #f0f0f0;
    box-sizing: border-box;
    box-shadow: 1px 1px 0 #555, inset 0 0 0 1px #fff;
    padding: 3px;
  }
  .place { left: 0; top: 3px; width: 204px; height: 64px; }
  .compl { left: 0; top: 71px; width: 139px; height: 85px; padding-left: 4px; }
  .ftitle { height: 14px; background: #a3bcd8; display: flex; align-items: center; justify-content: space-between; padding: 0 3px 0 2px; font-weight: bold; font-size: 9.5px; color: #1a1a1a; }
  .ftitle b { width: 10px; height: 11px; background: #f4f4f4; text-align: center; line-height: 11px; font-size: 12px; }
  .fgrid { display: grid; justify-items: center; align-items: center; padding: 0 1px; }
  .nine { grid-template-columns: repeat(9, 21.8px); grid-auto-rows: 23px; margin-top: -1px; }
  .six { grid-template-columns: repeat(6, 21.8px); grid-auto-rows: 21.5px; margin-top: 1px; }
  .fic { width: 16px; height: 16px; }

  .status { height: 29px; flex: none; display: flex; align-items: center; font-size: 10.7px; color: #222; position: relative; }
  .scell { display: flex; align-items: center; gap: 5px; white-space: nowrap; }
  .zap { width: 17px; height: 13px; flex: none; }
  .scell.a { margin-left: 8px; width: 169px; gap: 3px; }
  .scell.b { width: 384px; gap: 8px; }
  .scell.c { gap: 12px; }
  .qmark {
    position: absolute;
    left: 1076px;
    top: 7px;
    width: 10px;
    height: 15px;
    border: 1px solid #333;
    border-radius: 2px;
    background: #f4f0b0;
    text-align: center;
    font-weight: bold;
    font-size: 12px;
    line-height: 15px;
  }
</style>
